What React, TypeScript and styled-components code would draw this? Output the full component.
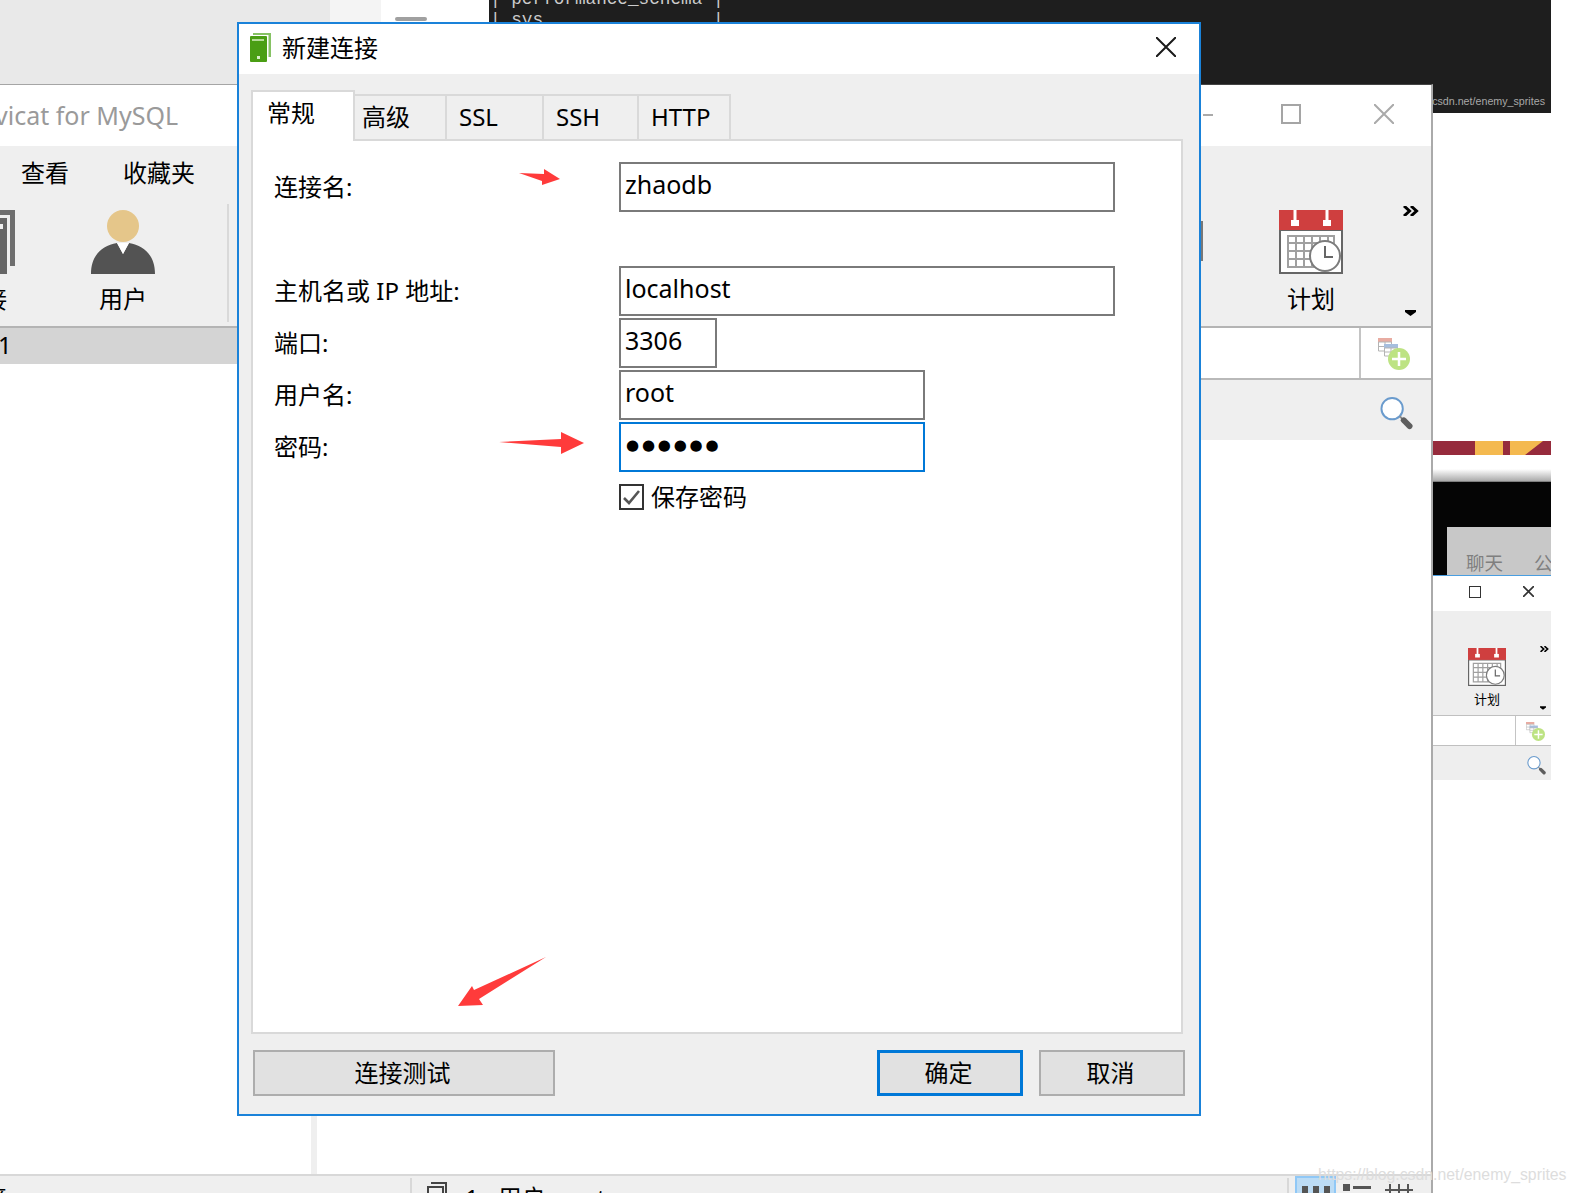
import React from "react";
import styled, { createGlobalStyle } from "styled-components";

const FONT = `"Noto Sans", "Noto Sans CJK SC", sans-serif`;

const Global = createGlobalStyle`
  html, body { margin: 0; padding: 0; background: #fff; }
  #root { width: 1576px; height: 1193px; overflow: hidden; }
  * { box-sizing: border-box; }
`;

const Desktop = styled.div`
  position: relative;
  width: 1576px;
  height: 1193px;
  overflow: hidden;
  background: #fff;
  color: #000;
  font: 24px/24px ${FONT};
`;

/* ---------- windows behind ---------- */
const BackdropBar = styled.div`
  position: absolute;
  left: 0;
  top: 0;
  width: 489px;
  height: 85px;
  display: flex;
`;
const BackdropGrey = styled.div`
  width: 330px;
  background: #e9e9e9;
`;
const BackdropPale = styled.div`
  width: 51px;
  background: #f4f4f4;
`;
const BackdropWhite = styled.div`
  flex: 1;
  background: #fff;
  padding: 17px 0 0 14px;
`;
const ScrollThumb = styled.div`
  width: 32px;
  height: 4px;
  border-radius: 2px;
  background: #a0a0a0;
`;
const Terminal = styled.div`
  position: absolute;
  left: 489px;
  top: 0;
  width: 1062px;
  height: 113px;
  display: flex;
  flex-direction: column;
  background: #1e1e1e;
  overflow: hidden;
`;
const TerminalText = styled.pre`
  margin: -11px 0 0 1px;
  font: 17.7px/21px "Liberation Mono", monospace;
  color: #cccccc;
`;
const TerminalUrl = styled.div`
  margin: auto 6px 5px auto;
  font: 10.7px/14px "Liberation Sans", sans-serif;
  color: #a8a8a8;
`;

const MainWindow = styled.div`
  position: absolute;
  left: 0;
  top: 84px;
  width: 1433px;
  height: 1109px;
  display: flex;
  flex-direction: column;
  border-top: 1px solid rgba(103, 103, 103, 0.52);
  border-right: 2px solid #aaaaaa;
  background: #fff;
  background-clip: padding-box;
  overflow: hidden;
`;
const TitleBar = styled.div`
  height: 61px;
  flex: none;
  display: flex;
  align-items: center;
  justify-content: space-between;
`;
const AppTitle = styled.div`
  margin: 0 0 2px -38px;
  font: 25px/32px ${FONT};
  color: #9a9a9a;
  white-space: nowrap;
`;
const WinControls = styled.div`
  display: flex;
  align-items: center;
  gap: 70px;
  padding: 0 37px 4px 0;
`;
const MinLine = styled.div`
  width: 10px;
  height: 2px;
  margin: 2px 1px 0 0;
  background: #aaaaaa;
`;
const MaxBox = styled.div`
  width: 20px;
  height: 20px;
  margin: 0 3px 0 -3px;
  border: 2px solid #a5a5a5;
`;

const Toolbar = styled.div`
  height: 182px;
  flex: none;
  display: flex;
  justify-content: space-between;
  background: #efefef;
  border-bottom: 2px solid #b4b4b4;
`;
const ToolLeft = styled.div`
  padding-top: 15px;
`;
const MenuRow = styled.div`
  display: flex;
  gap: 54px;
  margin: 0 0 25px 21px;
  height: 24px;
  white-space: nowrap;
`;
const ToolRow = styled.div`
  display: flex;
  gap: 76px;
  margin-left: -49px;
`;
const ToolBtn = styled.div<{ $w?: number; $font?: number; $gap?: number }>`
  width: ${(p) => p.$w ?? 64}px;
  display: flex;
  flex-direction: column;
  align-items: center;
  gap: ${(p) => p.$gap ?? 13}px;
  font-size: ${(p) => p.$font ?? 24}px;
  line-height: ${(p) => p.$font ?? 24}px;
  white-space: nowrap;
  svg { display: block; flex: none; }
`;
const ToolSep = styled.div`
  width: 2px;
  height: 118px;
  margin: -6px 0 0 -4px;
  background: #d9d9d9;
`;
const ToolRight = styled.div`
  width: 230px;
  display: flex;
  position: relative;
  padding-top: 64px;
`;
const Grip = styled.div`
  width: 2px;
  height: 40px;
  margin: 11px 76px 0 0;
  background: #777;
`;
const Overflow = styled.div`
  margin: -4px 0 0 60px;
  display: flex;
  flex-direction: column;
  justify-content: space-between;
  align-items: flex-start;
  height: 110px;
  svg { display: block; }
  svg:last-child { margin-left: 2px; }
`;

const Body = styled.div`
  flex: 1;
  min-height: 0;
  display: flex;
`;
const LeftPane = styled.div`
  width: 317px;
  flex: none;
  display: flex;
  flex-direction: column;
`;
const TabStrip = styled.div`
  height: 36px;
  flex: none;
  background: #d4d4d4;
  padding: 5px 0 0 0;
  overflow: hidden;
`;
const TabStripText = styled.div`
  margin-left: -2px;
`;
const TreeArea = styled.div`
  flex: 1;
  border-right: 6px solid #efefef;
`;
const RightPane = styled.div`
  flex: 1;
  min-width: 0;
`;
const FilterRow = styled.div`
  height: 52px;
  display: flex;
  justify-content: flex-end;
  border-bottom: 2px solid #b9b9b9;
`;
const IconCell = styled.div`
  width: 72px;
  padding: 10px 0 0 17px;
  border-left: 2px solid #c4c4c4;
  svg { display: block; }
`;
const SearchRow = styled.div`
  height: 60px;
  display: flex;
  justify-content: flex-end;
  padding: 17px 18px 0 0;
  background: #efefef;
  svg { display: block; }
`;
const StatusBar = styled.div`
  height: 19px;
  flex: none;
  display: flex;
  background: #efefef;
  border-top: 2px solid #d8d8d8;
  overflow: hidden;
`;
const StatusFirst = styled.div`
  width: 412px;
  height: 40px;
  margin-top: 2px;
  padding-left: 0;
  border-right: 2px solid #d8d8d8;
  overflow: hidden;
`;
const StatusClip = styled.div`
  margin: 8px 0 0 -17px;
`;
const StatusItems = styled.div`
  display: flex;
  padding: 8px 0 0 15px;
  white-space: nowrap;
  svg { display: block; margin-top: -2px; }
`;
const StatusNum = styled.span`
  margin: 2px 19px 0 18px;
`;
const StatusText = styled.span`
  margin-top: 2px;
`;
const StatusRight = styled.div`
  margin-left: auto;
  display: flex;
  padding-right: 18px;
  border-left: 2px solid #d8d8d8;
  margin-top: 2px;
  svg { display: block; }
`;
const ViewBtn = styled.div<{ $active?: boolean; $gap: number }>`
  width: ${(p) => (p.$active ? 41 : 28)}px;
  margin-left: ${(p) => p.$gap}px;
  margin-top: ${(p) => (p.$active ? -2 : 0)}px;
  height: 20px;
  padding: ${(p) => (p.$active ? "8px 5px 0" : "6px 0 0")};
  background: ${(p) => (p.$active ? "#bcdcf5" : "transparent")};
  border: ${(p) => (p.$active ? "2px solid #90c8f6" : "none")};
  border-bottom: none;
`;

/* ---------- right strip: another window ---------- */
const Strip = styled.div`
  position: absolute;
  left: 1433px;
  top: 441px;
  width: 118px;
  display: flex;
  flex-direction: column;
`;
const Banner = styled.div`
  height: 14px;
  background: #962b3c;
  svg { display: block; }
`;
const Fade = styled.div`
  height: 27px;
  background: linear-gradient(#fff 0, #fff 14px, #aaa 26px, #555 27px);
`;
const BlackPane = styled.div`
  height: 93px;
  background: #050505;
  padding: 45px 0 0 14px;
`;
const GreyTab = styled.div`
  height: 48px;
  background: #c8c8c8;
  display: flex;
  gap: 31px;
  padding: 26px 0 0 19px;
  font-size: 18.5px;
  line-height: 20px;
  color: #7f7f7f;
  white-space: nowrap;
  overflow: hidden;
`;
const MiniTitle = styled.div`
  height: 36px;
  display: flex;
  justify-content: flex-end;
  align-items: center;
  gap: 42px;
  padding: 0 17px 4px 0;
  border-top: 1px solid #4a9ee0;
  svg { display: block; }
`;
const MiniBox = styled.div`
  width: 12px;
  height: 12px;
  border: 1.5px solid #333;
`;
const MiniToolbar = styled.div`
  height: 105px;
  display: flex;
  padding: 37px 0 0 35px;
  background: #eeeeee;
  border-bottom: 1px solid #c0c0c0;
`;
const MiniOverflow = styled.div`
  height: 64px;
  margin: -2px 0 0 34px;
  display: flex;
  flex-direction: column;
  justify-content: space-between;
  svg { display: block; }
`;
const MiniFilter = styled.div`
  height: 30px;
  display: flex;
  justify-content: flex-end;
  border-bottom: 1px solid #c0c0c0;
`;
const MiniCell = styled.div`
  width: 36px;
  padding: 6px 0 0 10px;
  border-left: 1px solid #c4c4c4;
  svg { display: block; }
`;
const MiniSearch = styled.div`
  height: 34px;
  display: flex;
  justify-content: flex-end;
  padding: 10px 5px 0 0;
  background: #eeeeee;
  svg { display: block; }
`;

/* ---------- dialog ---------- */
const Dialog = styled.div`
  position: absolute;
  left: 237px;
  top: 22px;
  width: 964px;
  height: 1094px;
  display: flex;
  flex-direction: column;
  border: 2px solid #1a82d9;
  background: #fff;
`;
const DialogTitle = styled.div`
  height: 50px;
  flex: none;
  display: flex;
  align-items: center;
  padding: 0 23px 4px 11px;
  gap: 11px;
  svg { display: block; flex: none; }
`;
const DialogName = styled.div`
  flex: 1;
  padding-top: 1px;
`;
const DialogBody = styled.div`
  flex: 1;
  min-height: 0;
  display: flex;
  flex-direction: column;
  padding: 16px 16px 0 12px;
  background: #efefef;
`;
const Tabs = styled.div`
  display: flex;
  align-items: flex-end;
  height: 51px;
  flex: none;
  margin-bottom: -2px;
  position: relative;
  z-index: 1;
`;
const Tab = styled.div<{ $w: number; $pad: number; $active?: boolean }>`
  width: ${(p) => p.$w}px;
  margin-left: ${(p) => (p.$active ? 0 : -2)}px;
  height: ${(p) => (p.$active ? 51 : 47)}px;
  padding: 9px 0 0 ${(p) => p.$pad}px;
  border: 2px solid #d9d9d9;
  border-bottom: ${(p) => (p.$active ? "none" : "2px solid #d9d9d9")};
  background: ${(p) => (p.$active ? "#fff" : "#efefef")};
  white-space: nowrap;
  position: relative;
  z-index: ${(p) => (p.$active ? 2 : 1)};
`;
const Pane = styled.div`
  flex: 1;
  min-height: 0;
  padding: 21px 0 0 21px;
  background: #fff;
  border: 2px solid #d9d9d9;
`;
const FormRow = styled.div<{ $top?: number }>`
  display: flex;
  align-items: center;
  margin-top: ${(p) => p.$top ?? 2}px;
`;
const Label = styled.div`
  width: 345px;
  flex: none;
  white-space: nowrap;
`;
const Field = styled.div<{ $w: number; $focus?: boolean }>`
  width: ${(p) => p.$w}px;
  height: 50px;
  padding: 0 0 6px 4px;
  display: flex;
  align-items: center;
  border: 2px solid ${(p) => (p.$focus ? "#0078d7" : "#7a7a7a")};
  font: 25px/30px ${FONT};
  background: #fff;
`;
const Dots = styled.span`
  font: 15px/20px "DejaVu Sans", sans-serif;
  letter-spacing: 2.8px;
  margin: 2px 0 0 1px;
`;
const CheckRow = styled.div`
  display: flex;
  align-items: center;
  gap: 7px;
  margin: 12px 0 0 345px;
`;
const CheckBox = styled.div`
  width: 25px;
  height: 26px;
  border: 2px solid #333;
  svg { display: block; }
`;
const DialogFooter = styled.div`
  height: 80px;
  flex: none;
  display: flex;
  justify-content: space-between;
  padding-top: 16px;
  margin: 0 -2px 0 2px;
`;
const FooterRight = styled.div`
  display: flex;
  gap: 16px;
`;
const Button = styled.div<{ $w: number; $primary?: boolean }>`
  width: ${(p) => p.$w}px;
  height: 46px;
  display: flex;
  align-items: center;
  justify-content: center;
  padding-right: 3px;
  background: #e1e1e1;
  border: ${(p) => (p.$primary ? "3px solid #0078d7" : "2px solid #adadad")};
`;

const Arrows = styled.svg`
  position: absolute;
  left: 0;
  top: 0;
  pointer-events: none;
`;
const Watermark = styled.div`
  position: absolute;
  left: 1318px;
  top: 1165px;
  font: 15.8px/20px "Liberation Sans", sans-serif;
  color: #dddddd;
  white-space: nowrap;
`;

/* ---------- icons ---------- */
const CrossIcon = ({ s, c, w }: { s: number; c: string; w: number }) => (
  <svg width={s} height={s} viewBox={`0 0 ${s} ${s}`}>
    <path d={`M0 0L${s} ${s}M${s} 0L0 ${s}`} stroke={c} strokeWidth={w} fill="none" />
  </svg>
);
const GreenServer = () => (
  <svg width="21" height="29" viewBox="0 0 21 29">
    <path d="M3 0H21V24H18.5V2H3Z" fill="#86c264" />
    <rect x="0" y="3" width="17" height="26" rx="1" fill="#4a9e14" />
    <rect x="2" y="6" width="12" height="2" fill="#b5dc99" />
    <rect x="7" y="23" width="3" height="3" fill="#d8eec8" />
  </svg>
);
const GreyServer = () => (
  <svg width="64" height="64" viewBox="0 0 64 64">
    <path d="M8 0H64V56H59V5H8Z" fill="#6e6e6e" />
    <rect x="0" y="8" width="56" height="56" fill="#666" />
    <rect x="8" y="14" width="44" height="5" fill="#f0f0f0" />
  </svg>
);
const UserIcon = () => (
  <svg width="64" height="64" viewBox="0 0 64 64">
    <circle cx="32" cy="16" r="16" fill="#e5c68a" />
    <path d="M0 64C0 46 10 36 26 33L32 44L38 33C54 36 64 46 64 64Z" fill="#535353" />
    <path d="M26 33H38L32 44Z" fill="#fff" />
  </svg>
);
const CalendarIcon = ({ s }: { s: number }) => (
  <svg width={s} height={s} viewBox="0 0 64 64">
    <rect x="1" y="20" width="62" height="43" fill="#fff" stroke="#666" strokeWidth="2" />
    <rect x="0" y="0" width="64" height="20" fill="#cf3f3f" />
    <path d="M16 0V12M48 0V12" stroke="#fff" strokeWidth="3" />
    <rect x="12" y="10" width="8" height="6" fill="#fff" />
    <rect x="44" y="10" width="8" height="6" fill="#fff" />
    <path
      d="M9 26H55V57H9ZM9 33H55M9 41H55M9 49H55M17 26V57M25 26V57M33 26V57M41 26V57M49 26V57"
      stroke="#a0a0a0"
      strokeWidth="2"
      fill="#fff"
    />
    <circle cx="46" cy="46" r="15" fill="#fff" stroke="#7c7c7c" strokeWidth="2" />
    <path d="M46 36V47H54" stroke="#666" strokeWidth="2" fill="none" />
  </svg>
);
const AddTableIcon = ({ s }: { s: number }) => (
  <svg width={s} height={s} viewBox="0 0 32 32">
    <rect x="0" y="0" width="14" height="4" fill="#e8aca2" />
    <path d="M.5 4H13.5V13H.5ZM.5 8.5H13.5M7 4V13" stroke="#b4b4b4" fill="#fff" />
    <rect x="6" y="6" width="14" height="4" fill="#a6bede" />
    <path d="M6.5 10H19.5V18H6.5ZM6.5 14H19.5M13 10V18" stroke="#b4b4b4" fill="#fff" />
    <circle cx="21" cy="21" r="11" fill="#bde383" />
    <path d="M21 14V28M14 21H28" stroke="#fff" strokeWidth="2.5" />
  </svg>
);
const SearchIcon = ({ s }: { s: number }) => (
  <svg width={s} height={s} viewBox="0 0 33 34">
    <circle cx="12" cy="12" r="11" fill="#fff" stroke="#6a9bcd" strokeWidth="2" />
    <path d="M20 20L23 23" stroke="#8a8a8a" strokeWidth="2" />
    <path d="M24 24L30 30" stroke="#5e5e5e" strokeWidth="6" strokeLinecap="round" />
  </svg>
);
const Chevrons = ({ w, h }: { w: number; h: number }) => (
  <svg width={w} height={h} viewBox="0 0 16 10">
    <path d="M1 0L6.5 5L1 10M8 0L13.5 5L8 10" stroke="#000" strokeWidth="3" fill="none" />
  </svg>
);
const Caret = ({ w, h }: { w: number; h: number }) => (
  <svg width={w} height={h} viewBox="0 0 11 6">
    <path d="M0 0H11V2L5.5 6L0 2Z" fill="#000" />
  </svg>
);
const DocIcon = () => (
  <svg width="20" height="16" viewBox="0 0 20 16">
    <path d="M4 1H19V14" stroke="#444" strokeWidth="2" fill="none" />
    <rect x="1" y="5" width="15" height="12" fill="none" stroke="#444" strokeWidth="2" />
  </svg>
);
const TileView = () => (
  <svg width="28" height="8" viewBox="0 0 28 8">
    <path d="M0 0H6V8H0ZM11 0H17V8H11ZM22 0H28V8H22Z" fill="#555" />
  </svg>
);
const ListView = () => (
  <svg width="28" height="10" viewBox="0 0 28 10">
    <rect x="0" y="0" width="7" height="7" fill="#555" />
    <rect x="10" y="2" width="18" height="3" fill="#555" />
  </svg>
);
const GridView = () => (
  <svg width="28" height="12" viewBox="0 0 28 12">
    <path d="M5 0V12M14 0V12M23 0V12M0 6H28" stroke="#555" strokeWidth="2" />
  </svg>
);

const TABS = [
  { name: "高级", w: 94, pad: 7 },
  { name: "SSL", w: 99, pad: 12 },
  { name: "SSH", w: 97, pad: 12 },
  { name: "HTTP", w: 94, pad: 12 },
];

export default function App() {
  return (
    <Desktop>
      <Global />
      <BackdropBar>
        <BackdropGrey />
        <BackdropPale />
        <BackdropWhite>
          <ScrollThumb />
        </BackdropWhite>
      </BackdropBar>
      <Terminal>
        <TerminalText>{"| performance_schema |\n| sys                |"}</TerminalText>
        <TerminalUrl>.csdn.net/enemy_sprites</TerminalUrl>
      </Terminal>

      <MainWindow>
        <TitleBar>
          <AppTitle>Navicat for MySQL</AppTitle>
          <WinControls>
            <MinLine />
            <MaxBox />
            <CrossIcon s={20} c="#aaaaaa" w={2} />
          </WinControls>
        </TitleBar>
        <Toolbar>
          <ToolLeft>
            <MenuRow>
              <span>查看</span>
              <span>收藏夹</span>
            </MenuRow>
            <ToolRow>
              <ToolBtn>
                <GreyServer />
                连接
              </ToolBtn>
              <ToolBtn>
                <UserIcon />
                用户
              </ToolBtn>
              <ToolSep />
            </ToolRow>
          </ToolLeft>
          <ToolRight>
            <Grip />
            <ToolBtn>
              <CalendarIcon s={64} />
              计划
            </ToolBtn>
            <Overflow>
              <Chevrons w={16} h={10} />
              <Caret w={11} h={6} />
            </Overflow>
          </ToolRight>
        </Toolbar>
        <Body>
          <LeftPane>
            <TabStrip>
              <TabStripText>1</TabStripText>
            </TabStrip>
            <TreeArea />
          </LeftPane>
          <RightPane>
            <FilterRow>
              <IconCell>
                <AddTableIcon s={32} />
              </IconCell>
            </FilterRow>
            <SearchRow>
              <SearchIcon s={33} />
            </SearchRow>
          </RightPane>
        </Body>
        <StatusBar>
          <StatusFirst>
            <StatusClip>接</StatusClip>
          </StatusFirst>
          <StatusItems>
            <DocIcon />
            <StatusNum>1</StatusNum>
            <StatusText>用户: root</StatusText>
          </StatusItems>
          <StatusRight>
            <ViewBtn $active $gap={6}>
              <TileView />
            </ViewBtn>
            <ViewBtn $gap={7}>
              <ListView />
            </ViewBtn>
            <ViewBtn $gap={14}>
              <GridView />
            </ViewBtn>
          </StatusRight>
        </StatusBar>
      </MainWindow>

      <Strip>
        <Banner>
          <svg width="118" height="14" viewBox="0 0 118 14">
            <path d="M42 0H70V14H42ZM77 0H110L92 14H77Z" fill="#f4b94f" />
          </svg>
        </Banner>
        <Fade />
        <BlackPane>
          <GreyTab>
            <span>聊天</span>
            <span>公告</span>
          </GreyTab>
        </BlackPane>
        <MiniTitle>
          <MiniBox />
          <CrossIcon s={11} c="#333" w={1.7} />
        </MiniTitle>
        <MiniToolbar>
          <ToolBtn $w={38} $font={13} $gap={7}>
            <CalendarIcon s={38} />
            计划
          </ToolBtn>
          <MiniOverflow>
            <Chevrons w={9} h={6} />
            <Caret w={6} h={4} />
          </MiniOverflow>
        </MiniToolbar>
        <MiniFilter>
          <MiniCell>
            <AddTableIcon s={19} />
          </MiniCell>
        </MiniFilter>
        <MiniSearch>
          <SearchIcon s={19} />
        </MiniSearch>
      </Strip>

      <Dialog>
        <DialogTitle>
          <GreenServer />
          <DialogName>新建连接</DialogName>
          <CrossIcon s={20} c="#1a1a1a" w={2} />
        </DialogTitle>
        <DialogBody>
          <Tabs>
            <Tab $active $w={104} $pad={14}>
              常规
            </Tab>
            {TABS.map((t) => (
              <Tab key={t.name} $w={t.w} $pad={t.pad}>
                {t.name}
              </Tab>
            ))}
          </Tabs>
          <Pane>
            <FormRow $top={0}>
              <Label>连接名:</Label>
              <Field $w={496}>zhaodb</Field>
            </FormRow>
            <FormRow $top={54}>
              <Label>主机名或 IP 地址:</Label>
              <Field $w={496}>localhost</Field>
            </FormRow>
            <FormRow>
              <Label>端口:</Label>
              <Field $w={98}>3306</Field>
            </FormRow>
            <FormRow>
              <Label>用户名:</Label>
              <Field $w={306}>root</Field>
            </FormRow>
            <FormRow>
              <Label>密码:</Label>
              <Field $w={306} $focus>
                <Dots>●●●●●●</Dots>
              </Field>
            </FormRow>
            <CheckRow>
              <CheckBox>
                <svg width="21" height="22" viewBox="0 0 21 22">
                  <path d="M3 12L8 17L18 5" stroke="#555" strokeWidth="2.6" fill="none" />
                </svg>
              </CheckBox>
              保存密码
            </CheckRow>
          </Pane>
          <DialogFooter>
            <Button $w={302}>连接测试</Button>
            <FooterRight>
              <Button $w={146} $primary>
                确定
              </Button>
              <Button $w={146}>取消</Button>
            </FooterRight>
          </DialogFooter>
        </DialogBody>
      </Dialog>

      <Arrows width="1576" height="1193" viewBox="0 0 1576 1193">
        <g fill="#ff3b3b">
          <polygon points="519,173 544,174 544,169 560,179 542,185 542,181" />
          <polygon points="499,442 561,439 561,432 584,443 561,454 561,447" />
          <polygon points="546,957 474,990 472,986 458,1006 483,1005 479,999" />
        </g>
      </Arrows>
      <Watermark>https://blog.csdn.net/enemy_sprites</Watermark>
    </Desktop>
  );
}
